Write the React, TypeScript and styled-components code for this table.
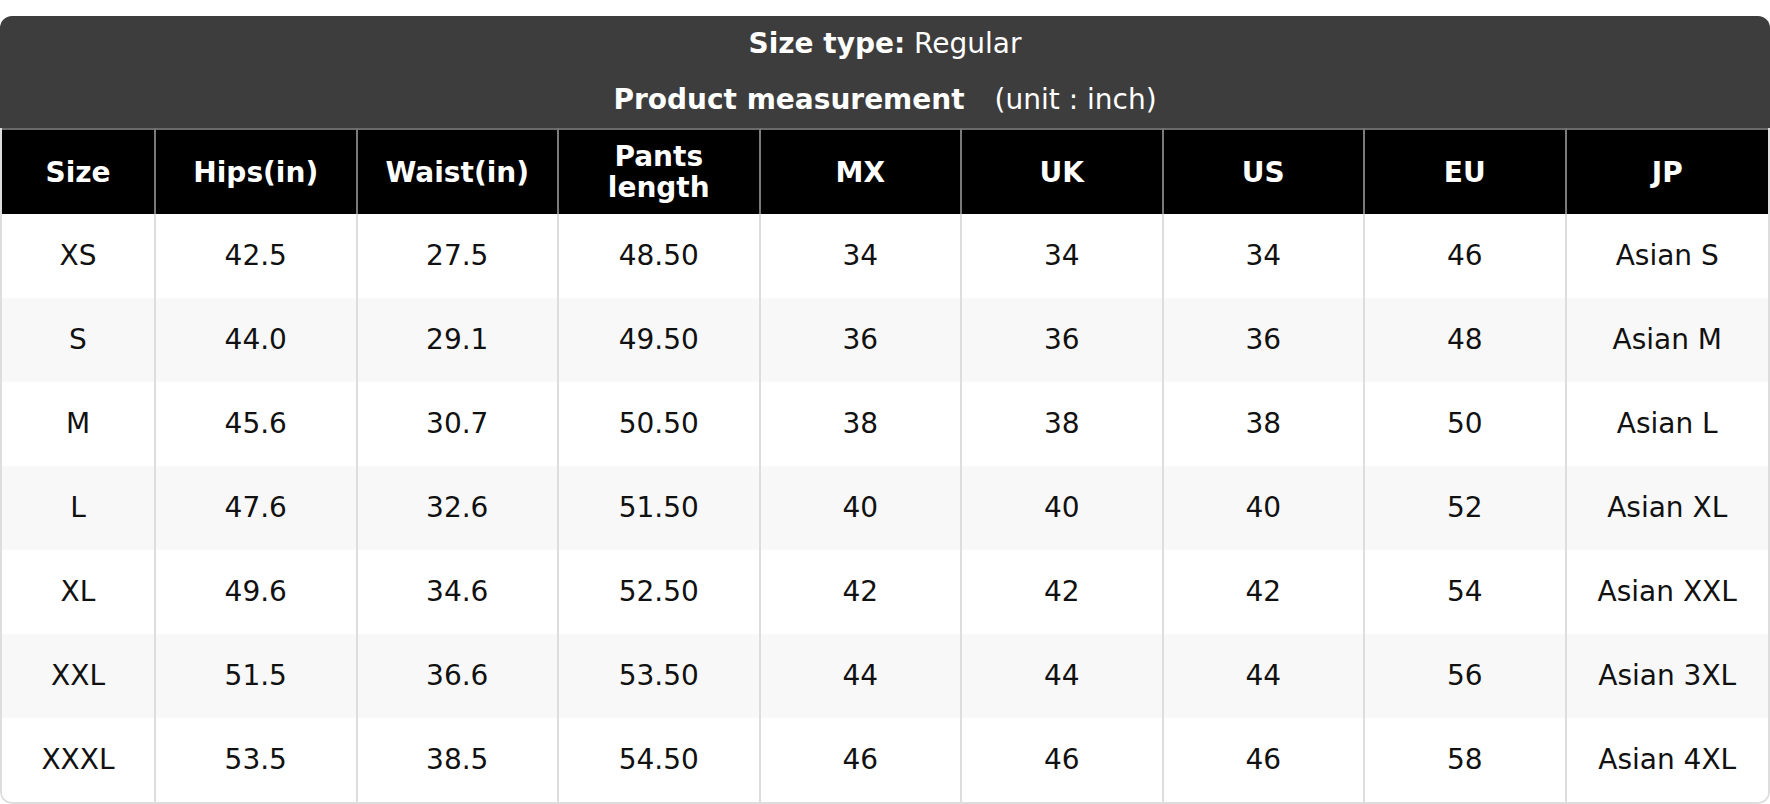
import React from 'react';
import styled, { createGlobalStyle } from 'styled-components';

const GlobalStyle = createGlobalStyle`
  * { box-sizing: border-box; }
  body {
    margin: 0;
    background: #fff;
    font-family: 'DejaVu Sans', 'Liberation Sans', sans-serif;
  }
`;

const Card = styled.div`
  margin-top: 16px;
  border-radius: 12px;
  overflow: hidden;
`;

const Heading = styled.div`
  background: #3d3d3d;
  color: #fff;
  text-align: center;
  font-size: 28px;
  line-height: 56px;
`;

const Bold = styled.span`
  font-weight: 700;
`;

const Unit = styled.span`
  margin-left: 30px;
`;

const TableFrame = styled.div`
  border: 2px solid #ddd;
  border-top: none;
  border-radius: 0 0 12px 12px;
  overflow: hidden;
`;

const Table = styled.table`
  width: 100%;
  table-layout: fixed;
  border-collapse: separate;
  border-spacing: 0;
  font-size: 28px;
`;

const SizeCol = styled.col`
  width: 154px;
`;

const HeadCell = styled.th`
  height: 86px;
  padding: 0 6px;
  background: #000;
  color: #fff;
  font-weight: 700;
  line-height: 31px;
  text-align: center;
  vertical-align: middle;
  border-top: 2px solid #6a6a6a;
  border-right: 2px solid #7a7a7a;
  &:last-child {
    border-right: none;
  }
`;

const Row = styled.tr<{ $shaded: boolean }>`
  background: ${(p) => (p.$shaded ? '#f8f8f8' : '#fff')};
`;

const Cell = styled.td`
  height: 84px;
  padding: 0 6px;
  color: #111;
  text-align: center;
  vertical-align: middle;
  line-height: 1.2;
  border-right: 2px solid #ddd;
  &:last-child {
    border-right: none;
  }
`;

const columns = ['Size', 'Hips(in)', 'Waist(in)', 'Pants length', 'MX', 'UK', 'US', 'EU', 'JP'];

const rows = [
  ['XS', '42.5', '27.5', '48.50', '34', '34', '34', '46', 'Asian S'],
  ['S', '44.0', '29.1', '49.50', '36', '36', '36', '48', 'Asian M'],
  ['M', '45.6', '30.7', '50.50', '38', '38', '38', '50', 'Asian L'],
  ['L', '47.6', '32.6', '51.50', '40', '40', '40', '52', 'Asian XL'],
  ['XL', '49.6', '34.6', '52.50', '42', '42', '42', '54', 'Asian XXL'],
  ['XXL', '51.5', '36.6', '53.50', '44', '44', '44', '56', 'Asian 3XL'],
  ['XXXL', '53.5', '38.5', '54.50', '46', '46', '46', '58', 'Asian 4XL'],
];

const App: React.FC = () => {
  return (
    <>
      <GlobalStyle />
      <Card>
        <Heading>
          <div>
            <Bold>Size type:</Bold> Regular
          </div>
          <div>
            <Bold>Product measurement</Bold>
            <Unit>(unit : inch)</Unit>
          </div>
        </Heading>
        <TableFrame>
          <Table>
            <colgroup>
              <SizeCol />
            </colgroup>
            <thead>
              <tr>
                {columns.map((c) => (
                  <HeadCell key={c}>
                    {c === 'Pants length' ? (
                      <>
                        Pants
                        <br />
                        length
                      </>
                    ) : (
                      c
                    )}
                  </HeadCell>
                ))}
              </tr>
            </thead>
            <tbody>
              {rows.map((r, i) => (
                <Row key={r[0]} $shaded={i % 2 === 1}>
                  {r.map((v, j) => (
                    <Cell key={j}>{v}</Cell>
                  ))}
                </Row>
              ))}
            </tbody>
          </Table>
        </TableFrame>
      </Card>
    </>
  );
};

export default App;
